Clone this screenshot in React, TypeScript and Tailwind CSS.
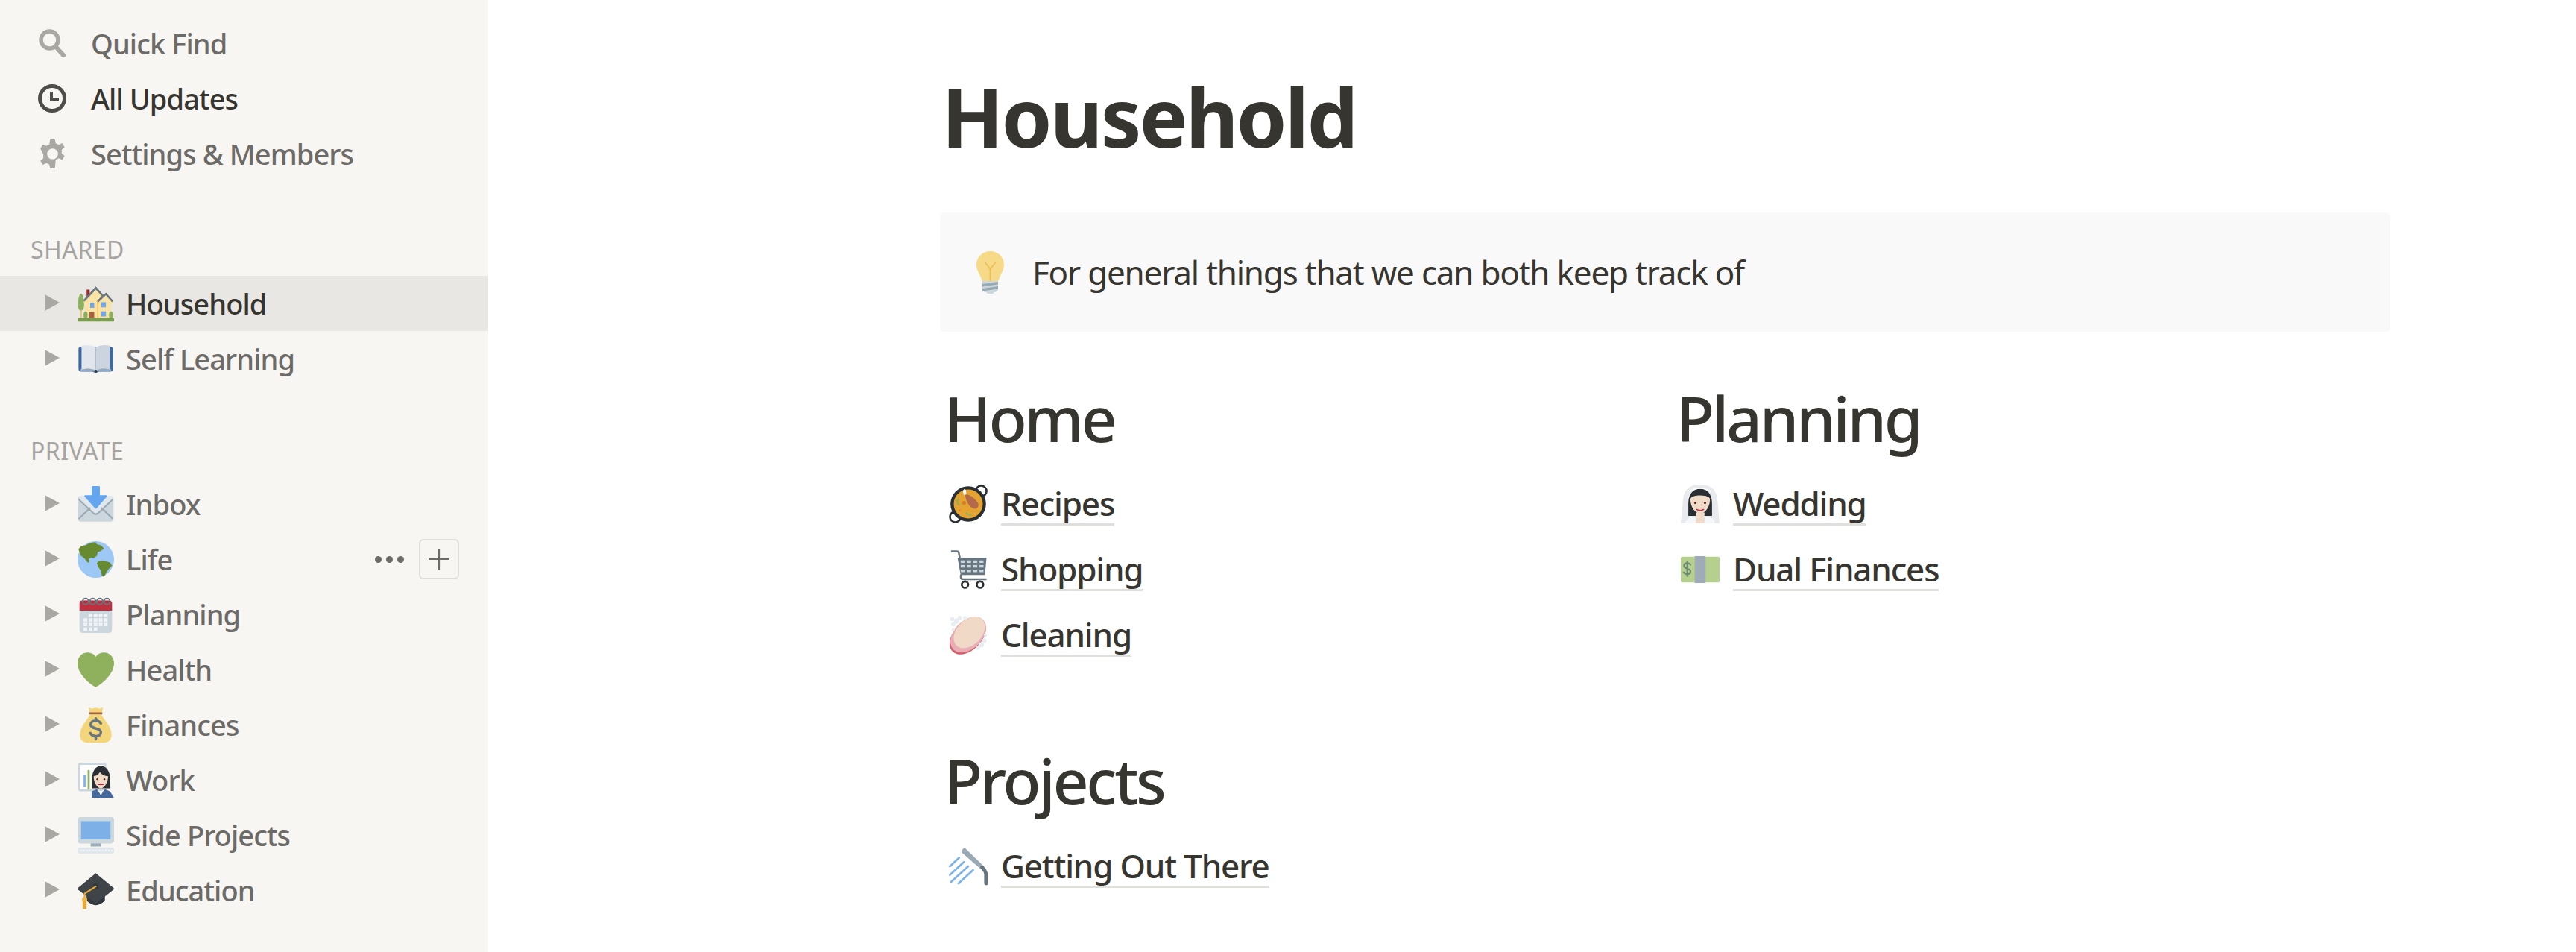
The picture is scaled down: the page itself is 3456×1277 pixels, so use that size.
import React from "react";

const F = "font-['Noto_Sans','Open_Sans',sans-serif]";

function Tri() {
  return (
    <svg viewBox="0 0 20 22" className="w-[20px] h-[22px] shrink-0 -mt-[3px]">
      <polygon points="0,0 20,11 0,22" fill="#a9a8a3" />
    </svg>
  );
}

const E = ({ children }: { children: React.ReactNode }) => (
  <svg viewBox="0 0 36 36" className="w-full h-full block">{children}</svg>
);

const House = () => (
  <E>
    <path d="M3.500 8C1.500 8 .5 14 .5 19c0 4 1.500 6 3 6s3-2 3-6c0-5-1-11-3-11z" fill="#8db05d" />
    <rect x="2.800" y="24" width="1.500" height="8" fill="#e9c46c" />
    <rect x="9" y="4" width="3" height="7" fill="#a0292f" />
    <path d="M6.500 15 18 3l8 8 3-2 6 7v2H6.500z" fill="#f8e2a6" />
    <rect x="7" y="16" width="26" height="16" fill="#f8e2a6" />
    <path d="M18 1 5.500 14.500l1.500 1.300L18 4l6 6.300-5 5.200 1.400 1.300L28 9.500l6 7 1.300-1.300L28.200 7l-2.800 2.200z" fill="#67757f" />
    <rect x="19.500" y="15" width="1" height="17" fill="#e9b94e" />
    <rect x="12.500" y="17" width="4" height="5" fill="#6ea8ea" />
    <rect x="23.500" y="16.500" width="4.500" height="5" fill="#6ea8ea" />
    <rect x="23.500" y="25.500" width="4.500" height="5" fill="#6ea8ea" />
    <rect x="11.500" y="26" width="5" height="6" fill="#a9623f" />
    <ellipse cx="8" cy="29" rx="2" ry="3.500" fill="#8db05d" />
    <ellipse cx="33" cy="29" rx="2" ry="3.500" fill="#8db05d" />
    <rect x="0" y="32" width="36" height="3.500" rx="1" fill="#7c9c4f" />
  </E>
);
const Book = () => (
  <E>
    <path d="M1 8c0-1 1-2 2-2h30c1 0 2 1 2 2v20c0 1.500-1 2.500-2.500 2.500H21c-1 0-1.500 1.500-3 1.500s-2-1.500-3-1.500H3.500C2 30.500 1 29.500 1 28z" fill="#3e6aa3" />
    <path d="M3 30c5-1 11-1 15 .5 4-1.500 10-1.500 15-.5v-2H3z" fill="#99aab5" />
    <path d="M4 5c4-1 10-1 14 1.500V29c-4-1.500-10-1.500-14-.5z" fill="#e1e6ee" />
    <path d="M32 5c-4-1-10-1-14 1.500V29c4-1.500 10-1.500 14-.5z" fill="#ccd5df" />
    <circle cx="18" cy="30" r="1.300" fill="#292f33" />
  </E>
);
const Inbox = () => (
  <E>
    <rect x="0.500" y="10" width="35" height="25" rx="2.500" fill="#ccd6dd" />
    <path d="M1 12 18 28l17-16c-.5-1.500-1.500-2-2.500-2h-29C2.500 10 1.500 10.500 1 12z" fill="#e1e8ed" />
    <path d="M1.500 33 13 22l-1-1.200L.8 31.500zM34.500 33 23 22l1-1.200 11.200 10.700z" fill="#99aab5" />
    <path d="M1 12 16 26c1.200 1 2.800 1 4 0l15-14v2L20.500 27.500c-1.500 1.300-3.500 1.300-5 0L1 14z" fill="#99aab5" />
    <path d="M15 0h6a1 1 0 0 1 1 1v8h6.500c.7 0 1 .8.500 1.300L18.700 22c-.4.400-1 .4-1.400 0L7 10.300c-.5-.5-.2-1.300.5-1.300H14V1a1 1 0 0 1 1-1z" fill="#63a5ef" />
  </E>
);
const Globe = () => (
  <E>
    <circle cx="18" cy="18" r="18" fill="#9dc8f5" />
    <path d="M8 4c3-2 7-3 10-3l1 2 4 1 3 3-3 3-3 .5-1 4-3 2-3-.5-2 2 1 3h-2l-3-4-4-3-2-6c1-2 2-3 5-4z" fill="#678a30" />
    <path d="M20 20l5-1 7 2 2 3-3 3-2 3-3 5-2-1-1-5-2-3-2-4z" fill="#678a30" />
  </E>
);
const Cal = () => (
  <E>
    <rect x="2" y="4" width="32" height="32" rx="3" fill="#ccd6dd" />
    <path d="M2 14V7a3 3 0 0 1 3-3h26a3 3 0 0 1 3 3v7z" fill="#be2f3f" />
    {[7, 14, 21, 28].map((x) => (
      <circle key={x} cx={x + 1} cy="5" r="3" fill="none" stroke="#66757f" strokeWidth="1.400" />
    ))}
    {[0, 1, 2, 3].map((r) =>
      [0, 1, 2, 3, 4].map((c) =>
        (r === 0 && c === 0) || (r === 3 && c > 2) ? null : (
          <rect key={`${r}${c}`} x={6 + c * 5} y={17 + r * 4.5} width="3.600" height="3.400" fill="#f1f4f7" />
        )
      )
    )}
  </E>
);
const Heart = () => (
  <E>
    <path d="M36 11.500C36 5.500 31.500 1 26 1c-3.400 0-6.300 1.600-8 4.200C16.300 2.600 13.400 1 10 1 4.500 1 0 5.500 0 11.500c0 1 .1 1.700.3 2.600C1.700 22.800 11.500 31.800 18 35c6.500-3.200 16.300-12.200 17.700-20.900.2-.9.300-1.600.3-2.600z" fill="#8fb05c" />
  </E>
);
const Bag = () => (
  <E>
    <path d="M11 .5l3 1.500 4-1 4 1 3-1.500-1 5.500H12z" fill="#f4d67a" />
    <path d="M12.500 7.500h11c2 5 9 10 10 19 .5 5-2 9-8 9h-15c-6 0-8.500-4-8-9 1-9 8-14 10-19z" fill="#f4d67a" />
    <rect x="11.500" y="5.500" width="13" height="2" fill="#a0603e" />
    <path d="M18 11.500v2.500M18 29.500v2.500M23 16.500c-1-2-3-2.800-5-2.800-3 0-5 1.500-5 3.800 0 5 10 2.800 10 7.500 0 2.500-2.200 4-5 4-2.300 0-4.300-1-5.300-3" fill="none" stroke="#67757f" strokeWidth="2.600" strokeLinecap="round" />
  </E>
);
const WorkE = () => (
  <E>
    <rect x="0.500" y="1" width="28" height="28" rx="2.500" fill="#ccd6dd" />
    <rect x="2.500" y="3" width="24" height="24" fill="#fff" />
    <rect x="6" y="13" width="2" height="12" fill="#7db3ea" />
    <rect x="10" y="8" width="2" height="19" fill="#8fb05c" />
    <path d="M14 26c0-2 .5-5 .5-10 0-8 4-12 8.500-12s9 4 9 12c0 5 .5 8 .5 10z" fill="#292f33" />
    <path d="M14 35.500V29l5-2 4 4 4-4 5 2 4 6.500z" fill="#45689b" />
    <path d="M20 27.500l3 5.500 3-5.500-3 2z" fill="#fff" />
    <path d="M16 14c3 0 5-2 6-4 2 3 5 4 8 4 .5 5-3 12-7 12s-7.500-7-7-12z" fill="#f0dcc9" />
    <circle cx="19.500" cy="17" r=".9" fill="#662113" />
    <circle cx="26.500" cy="17" r=".9" fill="#662113" />
    <rect x="20.500" y="21.500" width="5" height="1.300" fill="#bb1a34" />
  </E>
);
const Monitor = () => (
  <E>
    <rect x="0" y="0" width="36" height="26" rx="3" fill="#ccd6dd" />
    <rect x="3.500" y="4" width="29" height="18" fill="#7eb0e8" />
    <rect x="13" y="26" width="10" height="3" fill="#99aab5" />
    <rect x="0" y="30" width="36" height="6" rx="2" fill="#e1e8ed" />
    {[3, 6, 9, 12, 15, 18, 21, 24, 27, 30, 33].map((x) => (
      <rect key={x} x={x} y="32.300" width="1.300" height="1.300" fill="#f5f8fa" />
    ))}
  </E>
);
const Cap = () => (
  <E>
    <path d="M9 17v11c3 3 6 4.500 9 4.500s6-1.500 9-4.500V17z" fill="#31373d" />
    <path d="M18 1 .5 15.500c-.5.500-.5 1 0 1.500L18 31l17.500-14c.5-.5.500-1 0-1.500z" fill="#3f4448" />
    <circle cx="18" cy="14" r="3" fill="#31373d" />
    <path d="M18 14 7 21v5" fill="none" stroke="#e8a934" strokeWidth="1.600" strokeLinecap="round" />
    <circle cx="7" cy="27" r="2.600" fill="#e8b44e" />
    <rect x="5" y="28" width="4" height="8" rx=".5" fill="#e8a934" />
  </E>
);
const Bulb = () => (
  <svg viewBox="0 0 37 57" className="w-[37px] h-[57px] block">
    <path d="M18.500 0C8 0 0 8 0 18c0 9 6 14 7.500 22h22C31 32 37 27 37 18 37 8 29 0 18.500 0z" fill="#f6da87" />
    <path d="M18.500 40V24M11.500 15l7 9 7-9" fill="none" stroke="#ecbe5a" strokeWidth="1.800" />
    <path d="M8 40h21v12c0 1.500-3 3-5 3l-2 2h-7l-2-2c-2 0-5-1.500-5-3z" fill="#ccd6dd" />
    <path d="M8 44l21-3v3.500L8 47.500zM8 50l21-3v3.500L8 53.500z" fill="#99aab5" />
  </svg>
);
const Paella = () => (
  <E>
    <circle cx="6" cy="30" r="5" fill="none" stroke="#292f33" strokeWidth="1.800" />
    <circle cx="30" cy="6" r="5" fill="none" stroke="#292f33" strokeWidth="1.800" />
    <circle cx="18" cy="18" r="16.500" fill="#292f33" />
    <circle cx="18" cy="18" r="13.500" fill="#e5a431" />
    <path d="M15 9c5 0 9 4 12 8 1 2 .5 5-2 5.500-4 .5-9-5-10-13.500z" fill="#b3694a" />
    <path d="M13 5.500l1.500-1.500 1.300 1 .5 4-2 1-1-2.500z" fill="#f5f8fa" />
    <path d="M9 13c-2 2-1.500 5 1 6" fill="none" stroke="#8db05d" strokeWidth="1.400" />
    <path d="M16 26c1 2 3 2.500 5 1.500" fill="none" stroke="#8db05d" strokeWidth="1.400" />
    <circle cx="14" cy="17" r="1.800" fill="#d2802b" />
    <circle cx="10" cy="24" r=".8" fill="#d2802b" />
  </E>
);
const CartE = () => (
  <E>
    <path d="M2 1h5.500c1 0 1.500.5 1.700 1.500L13 21" fill="none" stroke="#66757f" strokeWidth="1.800" />
    <path d="M8 7h27l-1.500 16H11z" fill="#66757f" />
    {[0, 1, 2].map((r) =>
      [0, 1, 2, 3].map((c) => (
        <rect key={`${r}${c}`} x={11 + c * 5.8} y={9.5 + r * 4.3} width="3.800" height="2.300" fill="#ccd6dd" />
      ))
    )}
    <path d="M35 27H14c-2 0-3-1-3-2.500S12 22 13 22" fill="none" stroke="#66757f" strokeWidth="1.800" />
    <circle cx="15" cy="32" r="3" fill="#fff" stroke="#292f33" strokeWidth="1.800" />
    <circle cx="29" cy="32" r="3" fill="#fff" stroke="#292f33" strokeWidth="1.800" />
  </E>
);
const Soap = () => (
  <E>
    <ellipse cx="17.500" cy="19" rx="13" ry="20" transform="rotate(45 17.500 19)" fill="#d8606c" />
    <ellipse cx="18" cy="17.500" rx="13" ry="19.500" transform="rotate(45 18 17.500)" fill="#e8adb5" />
    <ellipse cx="19" cy="15.500" rx="11.500" ry="17" transform="rotate(45 19 15.500)" fill="#f0d9c6" />
    {[[3, 3, 2], [7, 5, 2.5], [4, 8, 2], [10, 2, 2], [15, 2, 1.8], [4, 13, 1.5], [33, 23, 2], [30, 27, 2.5], [34, 18, 1.5], [27, 30, 1.8]].map(([x, y, r], i) => (
      <circle key={i} cx={x} cy={y} r={r} fill="#e8edf1" />
    ))}
  </E>
);
const Bride = () => (
  <E>
    <path d="M18 0C9 0 3 4 2 14L0 36h36l-2-22C33 4 27 0 18 0z" fill="#e8eaed" />
    <path d="M18 4C11 4 7 9 7 18v11h22V18c0-9-4-14-11-14z" fill="#292f33" />
    <path d="M8 6.500c3-2 6-3 10-3s7 1 10 3" fill="none" stroke="#fff" strokeWidth="1" />
    <path d="M18 10c-4 0-8 1-9 3-.5 7 4 14 9 14s9.500-7 9-14c-1-2-5-3-9-3z" fill="#f0dcc9" />
    <rect x="14" y="26" width="8" height="7" fill="#f0dcc9" />
    <path d="M4 36c1-4 4-6 9-6l1 2v4zM32 36c-1-4-4-6-9-6l-1 2v4z" fill="#f5f8fa" />
    <path d="M14 36v-3h8v3z" fill="#f0dcc9" />
    <circle cx="13.500" cy="17" r="1.100" fill="#662113" />
    <circle cx="22.500" cy="17" r="1.100" fill="#662113" />
    <path d="M14.500 23c2 1.500 5 1.500 7 0" fill="none" stroke="#c6283e" strokeWidth="1.100" />
  </E>
);
const Money = () => (
  <E>
    <rect x="0" y="6" width="36" height="24" rx="1.500" fill="#b4d08c" />
    <rect x="13" y="5.500" width="10" height="25" fill="#a0abb8" />
    <path d="M9 13.500c-.7-1.200-2-1.500-3-1.500-1.700 0-3 .9-3 2.500 0 3.300 6 2 6 5.200 0 1.500-1.300 2.500-3 2.500-1.400 0-2.600-.7-3.200-1.700M6 10.500v13.500" fill="none" stroke="#6f8a73" strokeWidth="1.500" strokeLinecap="round" />
  </E>
);
const Shower = () => (
  <E>
    <path d="M13 2c-1.500 1.500-1 3 0 4l17 15 2.500-3L16 2c-1-1-2-1-3 0z" fill="#99aab5" />
    <path d="M31 19c2 2 3.500 4 3.500 7v8" fill="none" stroke="#67757f" strokeWidth="3.400" strokeLinecap="round" />
    <path d="M9.500 10 1 18M14 14 1 26M18 18 2 32.500M22.500 21.500 9 34" fill="none" stroke="#7db3ea" strokeWidth="1.900" strokeLinecap="round" />
  </E>
);

function SideNav({ icon, label, dark }: { icon: React.ReactNode; label: string; dark?: boolean }) {
  return (
    <div className="h-[74px] flex items-center pl-[50px]">
      <div className="w-[40px] h-[40px] flex items-center justify-center shrink-0">{icon}</div>
      <span className={`ml-[32px] text-[38px] font-medium tracking-[-0.9px] ${dark ? "text-[#37352f]" : "text-[#6c6b67]"}`}>{label}</span>
    </div>
  );
}

function PageRow({ emoji, label, active, hover }: { emoji: React.ReactNode; label: string; active?: boolean; hover?: boolean }) {
  return (
    <div className={`h-[74px] flex items-center pl-[60px] pr-[39px] ${active ? "bg-[#e8e7e4]" : ""}`}>
      <Tri />
      <div className="ml-[24px] w-[49px] h-[49px] shrink-0">{emoji}</div>
      <span className={`ml-[16px] text-[38px] font-medium tracking-[-0.9px] ${active ? "text-[#37352f]" : "text-[#6c6b67]"}`}>{label}</span>
      {hover && (
        <div className="ml-auto flex items-center">
          <div className="flex gap-[6px] mr-[20px]">
            <span className="w-[9px] h-[9px] rounded-full bg-[#6c6b67]" />
            <span className="w-[9px] h-[9px] rounded-full bg-[#6c6b67]" />
            <span className="w-[9px] h-[9px] rounded-full bg-[#6c6b67]" />
          </div>
          <div className="w-[54px] h-[54px] rounded-[6px] border-[2px] border-[#dfded9] flex items-center justify-center">
            <svg viewBox="0 0 28 28" className="w-[28px] h-[28px]">
              <path d="M14 0v28M0 14h28" stroke="#6c6b67" strokeWidth="2.200" />
            </svg>
          </div>
        </div>
      )}
    </div>
  );
}

function SectionLabel({ children }: { children: React.ReactNode }) {
  return <div className="pl-[41px] h-[46px] flex items-center text-[32px] tracking-[0.5px] text-[#a5a4a0]">{children}</div>;
}

function LinkRow({ emoji, label }: { emoji: React.ReactNode; label: string }) {
  return (
    <div className="h-[88px] flex items-center">
      <div className="w-[52px] h-[52px] ml-[6px] mr-[18px] shrink-0">{emoji}</div>
      <span className="font-medium text-[44px] leading-[54px] tracking-[-1.2px] text-[#37352f] border-b-[3px] border-[#dfdfdc]">{label}</span>
    </div>
  );
}

function H({ children }: { children: React.ReactNode }) {
  return <h2 className="text-[84px] leading-[110px] font-medium tracking-[-3.4px] text-[#37352f]">{children}</h2>;
}

export default function App() {
  return (
    <div className={`${F} flex w-[3456px] h-[1277px] overflow-hidden bg-white`}>
      <aside className="w-[655px] h-full shrink-0 bg-[#f7f6f3] pt-[21px]">
        <SideNav
          label="Quick Find"
          icon={
            <svg viewBox="0 0 36 38" className="w-[36px] h-[38px]">
              <circle cx="14.500" cy="14.500" r="11.500" fill="none" stroke="#a9a8a3" strokeWidth="5.500" />
              <path d="M23 24l10 11" stroke="#a9a8a3" strokeWidth="6" strokeLinecap="round" />
            </svg>
          }
        />
        <SideNav
          dark
          label="All Updates"
          icon={
            <svg viewBox="0 0 38 38" className="w-[38px] h-[38px]">
              <circle cx="19" cy="19" r="16.500" fill="none" stroke="#4e4d49" strokeWidth="5" />
              <path d="M16 10v12h12v-4H20v-8z" fill="#4e4d49" />
            </svg>
          }
        />
        <SideNav
          label="Settings & Members"
          icon={
            <svg viewBox="0 0 24 24" className="w-[39px] h-[39px]">
              <path
                fillRule="evenodd"
                fill="#a9a8a3"
                d="M10 0h4l.6 3.200c.9.300 1.700.7 2.400 1.200l3-1.300 2 3.400-2.500 2.100c.2.900.2 1.900 0 2.800l2.500 2.100-2 3.400-3-1.300c-.7.500-1.500.9-2.400 1.200L14 24h-4l-.6-3.200c-.9-.3-1.700-.7-2.400-1.200l-3 1.300-2-3.400 2.500-2.100c-.2-.9-.2-1.900 0-2.800L2 7.500l2-3.400 3 1.300c.7-.5 1.500-.9 2.400-1.200zM12 7.500a4.500 4.500 0 1 0 0 9 4.500 4.500 0 0 0 0-9z"
              />
            </svg>
          }
        />
        <div className="mt-[69px] mb-[12px]">
          <SectionLabel>SHARED</SectionLabel>
        </div>
        <PageRow active emoji={<House />} label="Household" />
        <PageRow emoji={<Book />} label="Self Learning" />
        <div className="mt-[64px] mb-[11px]">
          <SectionLabel>PRIVATE</SectionLabel>
        </div>
        <PageRow emoji={<Inbox />} label="Inbox" />
        <PageRow hover emoji={<Globe />} label="Life" />
        <PageRow emoji={<Cal />} label="Planning" />
        <PageRow emoji={<Heart />} label="Health" />
        <PageRow emoji={<Bag />} label="Finances" />
        <PageRow emoji={<WorkE />} label="Work" />
        <PageRow emoji={<Monitor />} label="Side Projects" />
        <PageRow emoji={<Cap />} label="Education" />
      </aside>
      <main className="flex-1 pl-[606px]">
        <div className="w-[1946px]">
          <h1 className="pl-[2px] pt-[88px] pb-[2px] text-[109px] leading-[135px] font-bold tracking-[-2.9px] text-[#37352f]">Household</h1>
          <div className="mt-[60px] h-[160px] rounded-[6px] bg-[#f9f9f9] flex items-center pl-[49px]">
            <Bulb />
            <span className="ml-[38px] text-[44px] tracking-[-1.22px] text-[#37352f]">For general things that we can both keep track of</span>
          </div>
          <div className="grid grid-cols-2 pl-[6px]">
            <div>
              <div className="pt-[61px]">
                <H>Home</H>
              </div>
              <div className="pt-[16px]">
                <LinkRow emoji={<Paella />} label="Recipes" />
                <LinkRow emoji={<CartE />} label="Shopping" />
                <LinkRow emoji={<Soap />} label="Cleaning" />
              </div>
              <div className="pt-[96px]">
                <H>Projects</H>
              </div>
              <div className="pt-[16px]">
                <LinkRow emoji={<Shower />} label="Getting Out There" />
              </div>
            </div>
            <div className="pl-[12px]">
              <div className="pt-[61px]">
                <H>Planning</H>
              </div>
              <div className="pt-[16px]">
                <LinkRow emoji={<Bride />} label="Wedding" />
                <LinkRow emoji={<Money />} label="Dual Finances" />
              </div>
            </div>
          </div>
        </div>
      </main>
    </div>
  );
}
